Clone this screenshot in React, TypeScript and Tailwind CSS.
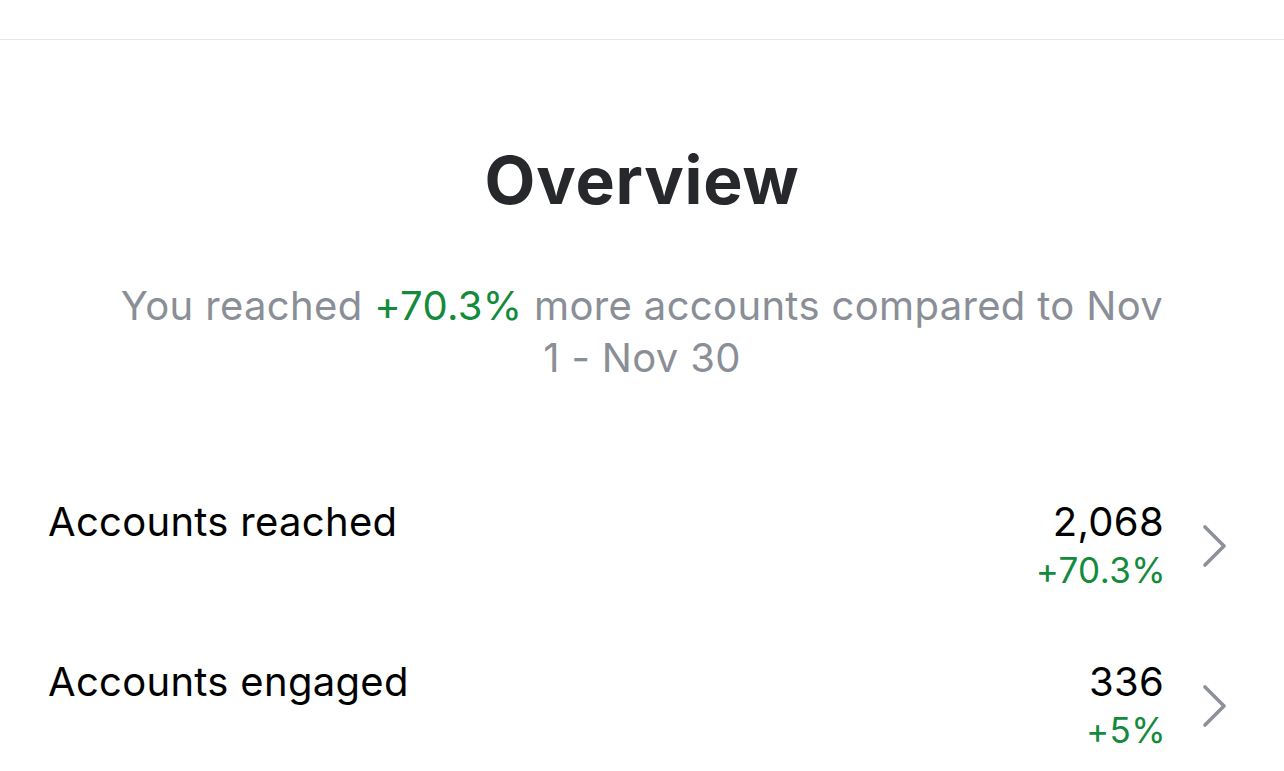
const rows = [
  { label: "Accounts reached", value: "2,068", change: "+70.3%" },
  { label: "Accounts engaged", value: "336", change: "+5%" },
];

function Chevron() {
  return (
    <svg width="26" height="44" viewBox="0 0 26 44" fill="none" className="shrink-0">
      <polyline
        points="3,3 22,22 3,41"
        stroke="#8c9098"
        strokeWidth="3.6"
        strokeLinecap="round"
        strokeLinejoin="round"
      />
    </svg>
  );
}

export default function App() {
  return (
    <div
      className="w-full min-h-screen bg-white overflow-hidden"
      style={{ fontFamily: "Inter, 'Noto Sans', sans-serif" }}
    >
      {/* top bar edge */}
      <div className="h-[40px] border-b border-[#e6e6e6]" />

      {/* Header */}
      <div className="mt-[107px] text-center">
        <h1 className="text-[66px] leading-[66px] font-bold text-[#26282c] tracking-[0.8px]">
          Overview
        </h1>
        <p className="mt-[67px] mx-auto max-w-[1064px] text-[40px] leading-[52px] tracking-[0.35px] text-[#8a8e96]">
          You reached <span className="text-[#148a3c]">+70.3%</span> more accounts compared to Nov 1 - Nov 30
        </p>
      </div>

      {/* Stats */}
      <div className="mt-[114px] pl-[48px] pr-[56px] flex flex-col gap-[64px]">
        {rows.map((row) => (
          <div key={row.label} className="flex items-center">
            <div className="flex-1 self-start text-[40px] leading-[48px] tracking-[0.3px] text-black">
              {row.label}
            </div>
            <div className="text-right">
              <div className="text-[40px] leading-[48px] tracking-[0.3px] text-black">{row.value}</div>
              <div className="text-[35px] leading-[48px] tracking-[0.4px] text-[#148a3c] mr-[-2px]">
                {row.change}
              </div>
            </div>
            <div className="ml-[38px]">
              <Chevron />
            </div>
          </div>
        ))}
      </div>
    </div>
  );
}
